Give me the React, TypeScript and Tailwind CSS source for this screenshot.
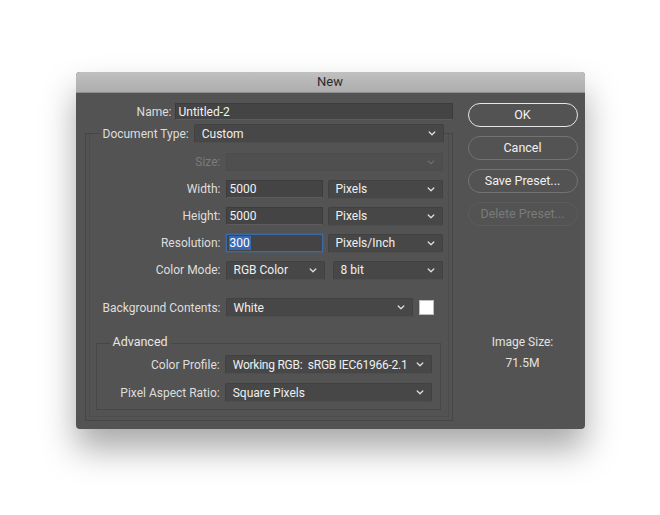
import React from "react";

const font = { fontFamily: "Roboto, 'Noto Sans', sans-serif" };

function Chevron({ dim }: { dim?: boolean }) {
  return (
    <svg width="8" height="5" viewBox="0 0 8 5" className="shrink-0">
      <path
        d="M1.2 1 L4 3.8 L6.8 1"
        fill="none"
        stroke={dim ? "#6a6a6a" : "#dcdcdc"}
        strokeWidth="1.3"
        strokeLinecap="round"
        strokeLinejoin="round"
      />
    </svg>
  );
}

function Select({
  value,
  className,
  disabled,
  tight,
}: {
  value?: string;
  className: string;
  disabled?: boolean;
  tight?: boolean;
}) {
  return (
    <div
      className={
        "flex items-center justify-between pl-[7px] pr-[7px] border rounded-[2px] " +
        (disabled
          ? "bg-[#4f4f4f] border-[#4b4b4b]"
          : "bg-[#474747] border-[#414141] border-b-[#4f4f4f]") +
        " " +
        className
      }
    >
      <span
        className={
          "text-[12px] text-[#efefef] whitespace-nowrap " + (tight ? "tracking-[-0.25px]" : "")
        }
      >
        {value}
      </span>
      <Chevron dim={disabled} />
    </div>
  );
}

function Input({ value, className }: { value: string; className: string }) {
  return (
    <div
      className={
        "flex items-center pl-[3px] bg-[#444444] border border-[#3c3c3c] border-b-[#5c5c5c] " +
        className
      }
    >
      <span className="text-[12px] text-[#f2f2f2]">{value}</span>
    </div>
  );
}

function Row({
  label,
  children,
  mt,
  h,
  labelW = "w-[131px]",
  dim,
}: {
  label: string;
  children: React.ReactNode;
  mt: string;
  h: string;
  labelW?: string;
  dim?: boolean;
}) {
  return (
    <div className={"flex items-center gap-[5px] " + mt + " " + h}>
      <div
        className={
          labelW +
          " text-right text-[12px] whitespace-nowrap " +
          (dim ? "text-[#7c7c7c]" : "text-[#dedede]")
        }
      >
        {label}
      </div>
      {children}
    </div>
  );
}

function Button({
  children,
  kind,
}: {
  children: React.ReactNode;
  kind: "default" | "normal" | "disabled";
}) {
  const cls =
    kind === "default"
      ? "border-[1.5px] border-[#e6e6e6] text-[#f2f2f2]"
      : kind === "normal"
      ? "border border-[#737373] text-[#f0f0f0]"
      : "border border-[#5c5c5c] text-[#7a7a7a]";
  return (
    <div
      className={
        "h-[24px] w-[110px] rounded-full flex items-center justify-center text-[12.5px] " + cls
      }
    >
      {children}
    </div>
  );
}

export default function App() {
  return (
    <div className="min-h-[515px] bg-white flex justify-center pt-[72px]" style={font}>
      <div className="w-[509px] h-[357px] rounded-[4px] overflow-hidden bg-[#535353] shadow-[0_20px_34px_rgba(0,0,0,0.34)] flex flex-col">
        {/* title bar */}
        <div className="h-[21px] bg-gradient-to-b from-[#c0c0c0] to-[#adadad] border-b border-[#8e8e8e] flex items-center justify-center">
          <span className="text-[13px] text-[#2b2b2b]">New</span>
        </div>

        <div className="flex pl-[9px] pt-[10px] gap-[15px]">
          {/* left column */}
          <div className="w-[368px] flex flex-col">
            <div className="flex items-center gap-[3px] h-[17px]">
              <div className="w-[87px] text-right text-[12px] text-[#dedede]">Name:</div>
              <Input value="Untitled-2" className="flex-1 h-[17px]" />
            </div>

            {/* outer group */}
            <div className="mt-[13px] border border-[#464646] px-[3px] pb-[3px]">
              <div className="border-x border-b border-[#4c4c4c] flex flex-col pr-[4px] pb-[6px]">
                <div className="flex items-center h-[19px] -mt-[10px] ml-[10px]">
                  <div className="bg-[#535353] pl-[3px] pr-[5px] text-[12px] text-[#dedede] whitespace-nowrap">
                    Document Type:
                  </div>
                  <Select value="Custom" className="w-[250px] h-[19px]" />
                </div>

                <Row label="Size:" mt="mt-[10px]" h="h-[18px]" dim>
                  <Select className="w-[217px] h-[18px]" disabled />
                </Row>
                <Row label="Width:" mt="mt-[9px]" h="h-[18px]">
                  <Input value="5000" className="w-[97px] h-[18px]" />
                  <Select value="Pixels" className="w-[115px] h-[19px]" />
                </Row>
                <Row label="Height:" mt="mt-[9px]" h="h-[18px]">
                  <Input value="5000" className="w-[97px] h-[18px]" />
                  <Select value="Pixels" className="w-[115px] h-[19px]" />
                </Row>
                <Row label="Resolution:" mt="mt-[9px]" h="h-[18px]">
                  <div className="w-[97px] h-[18px] flex items-center pl-[2px] bg-[#444444] border border-[#3a6aa8] shadow-[0_0_0_1px_rgba(58,106,168,0.35)]">
                    <span className="text-[12px] text-white bg-[#3869b6] px-[1px] leading-[14px]">
                      300
                    </span>
                  </div>
                  <Select value="Pixels/Inch" className="w-[115px] h-[19px]" />
                </Row>
                <Row label="Color Mode:" mt="mt-[9px]" h="h-[18px]">
                  <Select value="RGB Color" className="w-[99px] h-[19px]" />
                  <Select value="8 bit" className="ml-[3px] w-[110px] h-[19px]" />
                </Row>
                <Row label="Background Contents:" mt="mt-[19px]" h="h-[19px]">
                  <Select value="White" className="w-[187px] h-[19px]" />
                  <div className="ml-[1px] w-[15px] h-[15px] bg-white border border-[#bdbdbd]" />
                </Row>

                {/* advanced group */}
                <div className="mt-[26px] ml-[6px] mr-[3px] border border-[#474747] flex flex-col pr-[8px] pb-[7px]">
                  <div className="flex -mt-[10px] ml-[13px] h-[16px]">
                    <div className="bg-[#535353] px-[3px] text-[12.5px] leading-[16px] text-[#e6e6e6]">
                      Advanced
                    </div>
                  </div>
                  <Row label="Color Profile:" mt="mt-[5px]" h="h-[19px]" labelW="w-[124px]">
                    <Select
                      value={"Working RGB:\u00a0 sRGB IEC61966-2.1"}
                      className="w-[208px] h-[19px]"
                      tight
                    />
                  </Row>
                  <Row label="Pixel Aspect Ratio:" mt="mt-[9px]" h="h-[19px]" labelW="w-[124px]">
                    <Select value="Square Pixels" className="w-[208px] h-[19px]" />
                  </Row>
                </div>
              </div>
            </div>
          </div>

          {/* right column */}
          <div className="w-[110px] flex flex-col">
            <div className="flex flex-col gap-[9px]">
              <Button kind="default">OK</Button>
              <Button kind="normal">Cancel</Button>
              <Button kind="normal">Save Preset...</Button>
              <Button kind="disabled">Delete Preset...</Button>
            </div>
            <div className="mt-[108px] text-center text-[12px] leading-[16px] text-[#e2e2e2]">
              Image Size:
            </div>
            <div className="mt-[5px] text-center text-[12px] leading-[16px] text-[#e2e2e2]">
              71.5M
            </div>
          </div>
        </div>
      </div>
    </div>
  );
}
